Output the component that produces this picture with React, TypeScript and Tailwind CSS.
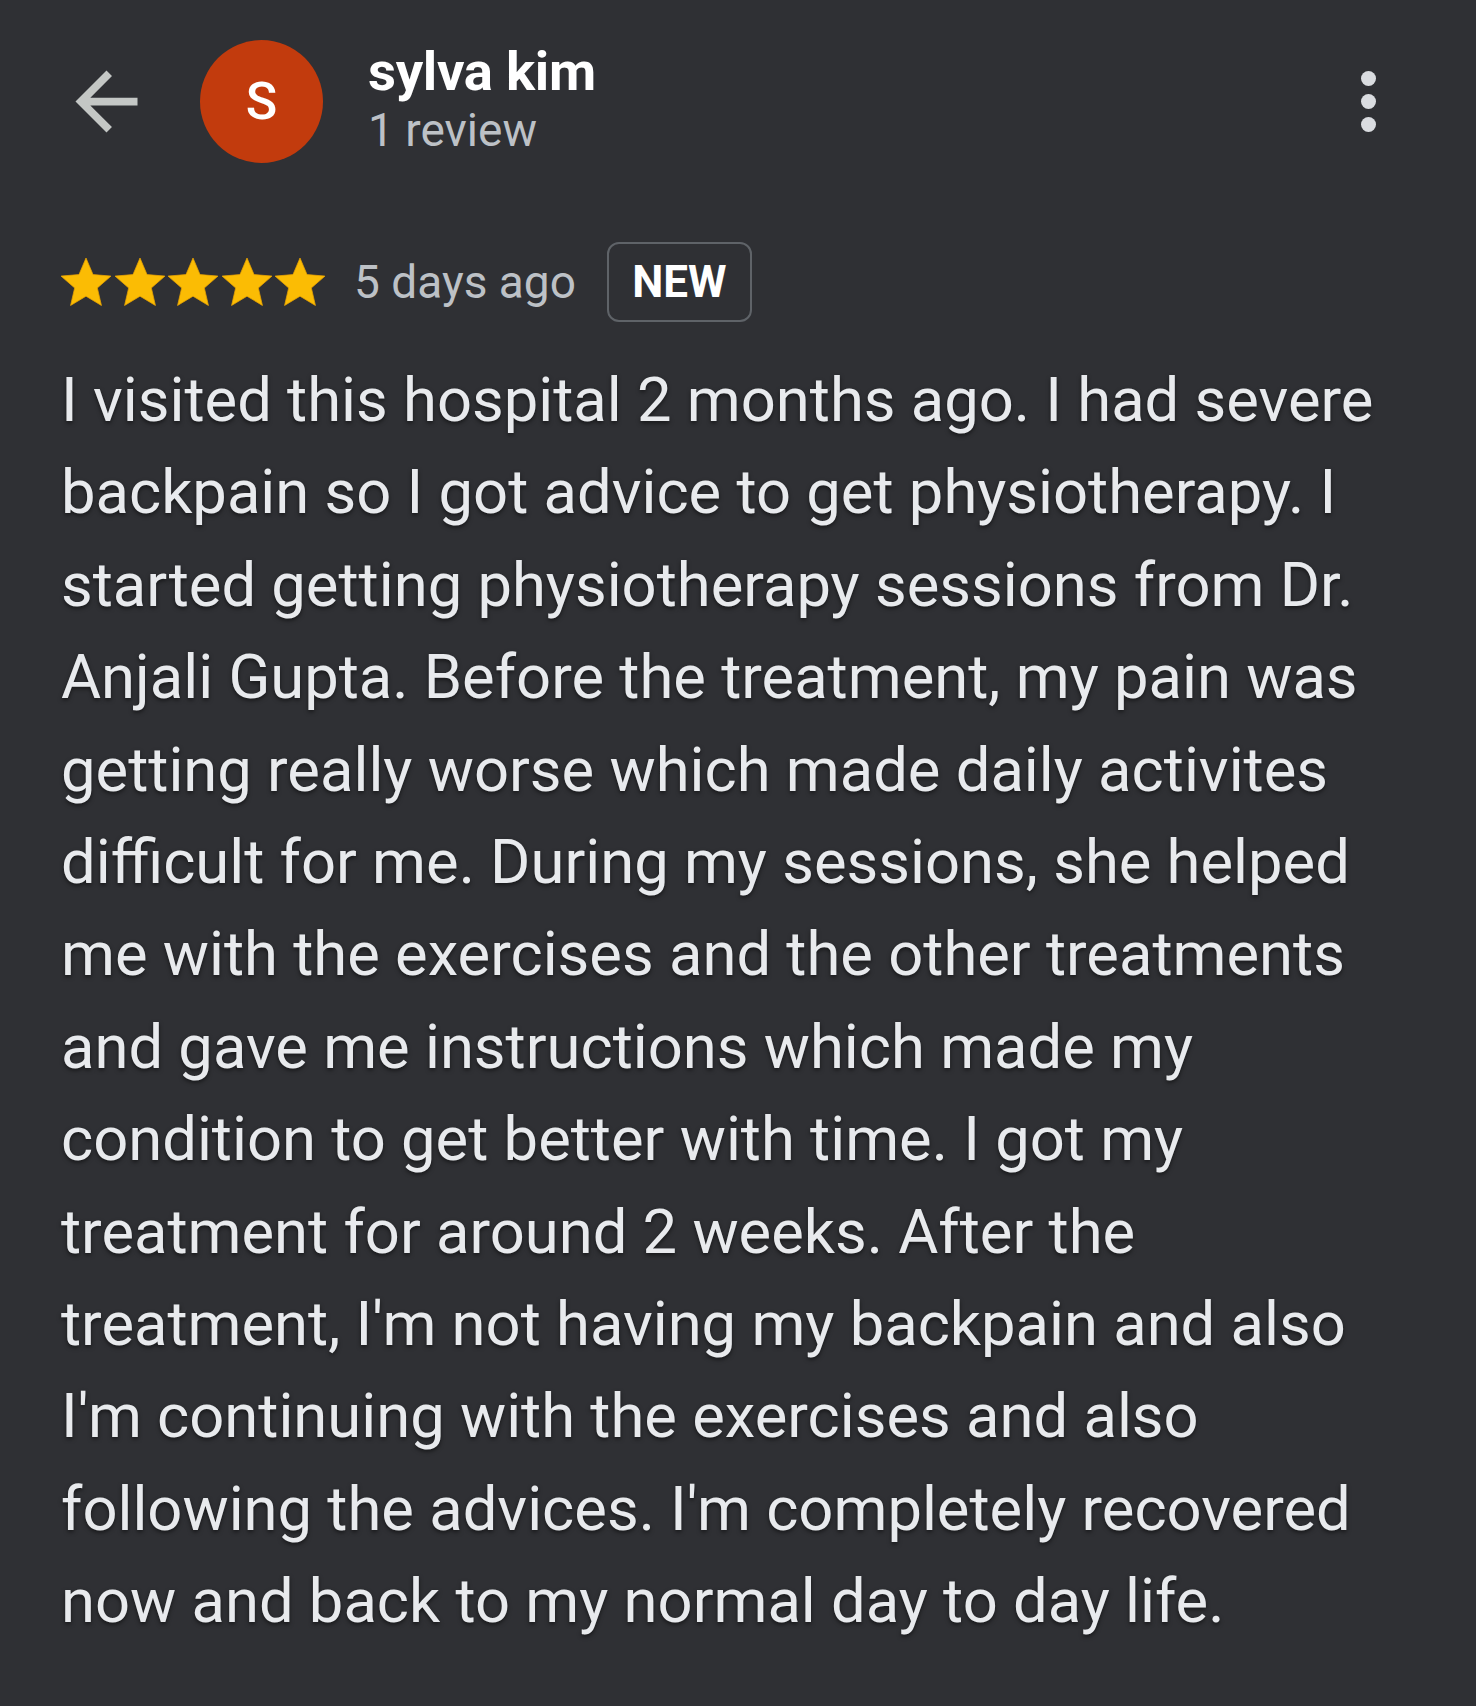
import React from "react";

const REVIEW_LINES = [
  "I visited this hospital 2 months ago. I had severe",
  "backpain so I got advice to get physiotherapy. I",
  "started getting physiotherapy sessions from Dr.",
  "Anjali Gupta. Before the treatment, my pain was",
  "getting really worse which made daily activites",
  "difficult for me. During my sessions, she helped",
  "me with the exercises and the other treatments",
  "and gave me instructions which made my",
  "condition to get better with time. I got my",
  "treatment for around 2 weeks. After the",
  "treatment, I'm not having my backpain and also",
  "I'm continuing with the exercises and also",
  "following the advices. I'm completely recovered",
  "now and back to my normal day to day life.",
];

function Star() {
  return (
    <svg viewBox="2 2 20 19" className="h-[47.5px] w-[50px]">
      <path
        d="M12 17.27L18.18 21l-1.64-7.03L22 9.24l-7.19-.61L12 2 9.19 8.63 2 9.24l5.46 4.73L5.82 21z"
        fill="#fbbc04"
        stroke="#e8a200"
        strokeWidth="0.3"
        strokeLinejoin="round"
      />
    </svg>
  );
}

export default function App() {
  return (
    <div className="min-h-[1706px] w-full bg-[#2f3034] font-['Roboto','Liberation_Sans',sans-serif] text-[#e8eaed]">
      {/* header */}
      <header className="flex items-center pl-[60px] pr-[100px] pt-[40px]">
        <svg viewBox="0 0 24 24" className="h-[93px] w-[93px] shrink-0" fill="#c4c7c5">
          <path d="M20 11H7.83l5.59-5.59L12 4l-8 8 8 8 1.41-1.41L7.83 13H20v-2z" />
        </svg>

        <div className="ml-[47px] flex h-[123px] w-[123px] shrink-0 items-center justify-center rounded-full bg-[#c23b0d]">
          <span className="text-[52px] font-medium leading-none text-white">S</span>
        </div>

        <div className="ml-[45px] flex flex-col">
          <p className="-mt-[3px] text-[54.5px] font-bold leading-[56px] tracking-[-0.3px] text-white">sylva kim</p>
          <p className="mt-[3px] text-[46px] leading-[56px] text-[#bdc1c6]">1 review</p>
        </div>

        <div className="ml-auto flex flex-col gap-[8px]">
          <span className="h-[15px] w-[15px] rounded-full bg-[#dadce0]" />
          <span className="h-[15px] w-[15px] rounded-full bg-[#dadce0]" />
          <span className="h-[15px] w-[15px] rounded-full bg-[#dadce0]" />
        </div>
      </header>

      {/* rating row */}
      <div className="mt-[79px] flex h-[80px] items-center pl-[61px]">
        <div className="flex items-center gap-[3.5px]">
          {[0, 1, 2, 3, 4].map((i) => (
            <Star key={i} />
          ))}
        </div>
        <span className="ml-[29px] text-[46px] leading-none text-[#bdc1c6]">5 days ago</span>
        <span className="ml-[31px] flex h-[80px] w-[145px] items-center justify-center rounded-[12px] border-2 border-[#5f6368] text-[44px] font-bold leading-none text-white">
          NEW
        </span>
      </div>

      {/* review body */}
      <div className="mt-[32px] pl-[61px] text-[61.5px] leading-[92.4px] [text-shadow:0_2px_4px_rgba(0,0,0,0.55)]">
        {REVIEW_LINES.map((line) => (
          <p key={line} className="whitespace-nowrap">
            {line}
          </p>
        ))}
      </div>
    </div>
  );
}
